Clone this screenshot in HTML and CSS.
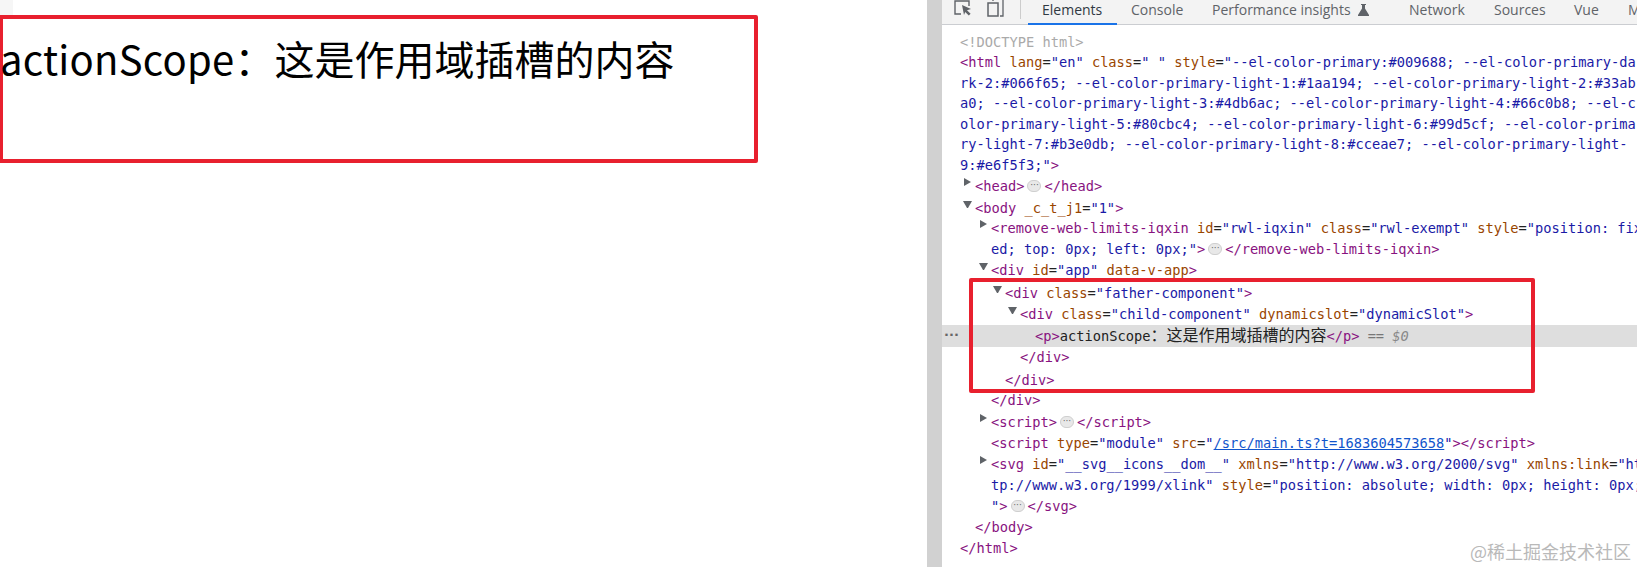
FILE: index.html
```html
<!DOCTYPE html>
<html lang="zh">
<head>
<meta charset="utf-8">
<title>actionScope</title>
<link rel="stylesheet" href="styles.css">
</head>
<body>
<div class="page">
  <main class="main">
    <div class="result-box"><p class="result-text"><span class="result-latin">actionScope</span>：这是作用域插槽的内容</p></div>
  </main>
  <div class="divider"></div>
  <section class="devtools">
    <nav class="tabbar">
      <div class="tools">
        <svg class="tool" width="22" height="22" viewBox="0 0 22 22"><path d="M8 16H2V3h14v5" fill="none" stroke="#5f6368" stroke-width="1.4"/><path d="M9 7l9 4-4 1.2 3.600 3.600-1.800 1.800-3.600-3.600L11 17z" fill="#5f6368"/></svg>
        <svg class="tool" width="22" height="22" viewBox="0 0 22 22"><path d="M9 3V1h10v17h-3" fill="none" stroke="#5f6368" stroke-width="1.3"/><rect x="4" y="5" width="10" height="13" fill="none" stroke="#5f6368" stroke-width="1.5"/></svg>
      </div>
      <a class="tab tab-active">Elements</a>
      <a class="tab tab-console">Console</a>
      <a class="tab tab-perf">Performance insights<svg class="flask" width="11" height="12" viewBox="0 0 11 12"><path d="M3 0h5v1H7v3.500l4 6.500v1H0v-1l4-6.500V1H3z" fill="#5f6368"/></svg></a>
      <a class="tab tab-network">Network</a>
      <a class="tab tab-sources">Sources</a>
      <a class="tab tab-vue">Vue</a>
      <a class="tab tab-more">M</a>
    </nav>
    <div class="tree">
      <div class="row l0 doctype">&lt;!DOCTYPE html&gt;</div>
      <div class="row wrap l0"><b>&lt;html</b> <i>lang</i>=<u>"en"</u> <i>class</i>=<u>" "</u> <i>style</i>=<u>"--el-color-primary:#009688; --el-color-primary-da</u></div>
      <div class="row wrap l0"><u>rk-2:#066f65; --el-color-primary-light-1:#1aa194; --el-color-primary-light-2:#33ab</u></div>
      <div class="row wrap l0"><u>a0; --el-color-primary-light-3:#4db6ac; --el-color-primary-light-4:#66c0b8; --el-c</u></div>
      <div class="row wrap l0"><u>olor-primary-light-5:#80cbc4; --el-color-primary-light-6:#99d5cf; --el-color-prima</u></div>
      <div class="row wrap l0"><u>ry-light-7:#b3e0db; --el-color-primary-light-8:#cceae7; --el-color-primary-light-</u></div>
      <div class="row l0"><u>9:#e6f5f3;"</u><b>&gt;</b></div>
      <div class="row l1"><span class="arrow"></span><b>&lt;head&gt;</b><span class="dots">···</span><b>&lt;/head&gt;</b></div>
      <div class="row l1 mt1"><span class="arrow open"></span><b>&lt;body</b> <i>_c_t_j1</i>=<u>"1"</u><b>&gt;</b></div>
      <div class="row l2"><span class="arrow"></span><b>&lt;remove-web-limits-iqxin</b> <i>id</i>=<u>"rwl-iqxin"</u> <i>class</i>=<u>"rwl-exempt"</u> <i>style</i>=<u>"position: fix</u></div>
      <div class="row l2"><u>ed; top: 0px; left: 0px;"</u><b>&gt;</b><span class="dots">···</span><b>&lt;/remove-web-limits-iqxin&gt;</b></div>
      <div class="row l2"><span class="arrow open"></span><b>&lt;div</b> <i>id</i>=<u>"app"</u> <i>data-v-app</i><b>&gt;</b></div>
      <div class="row l3 mt2"><span class="arrow open"></span><b>&lt;div</b> <i>class</i>=<u>"father-component"</u><b>&gt;</b></div>
      <div class="row l4"><span class="arrow open"></span><b>&lt;div</b> <i>class</i>=<u>"child-component"</u> <i>dynamicslot</i>=<u>"dynamicSlot"</u><b>&gt;</b></div>
      <div class="row l5 selected"><span class="more">···</span><b>&lt;p&gt;</b>actionScope<span class="cjk">：这是作用域插槽的内容</span><b>&lt;/p&gt;</b> <span class="eq">== <em>$0</em></span></div>
      <div class="row l4"><b>&lt;/div&gt;</b></div>
      <div class="row l3 mt2"><b>&lt;/div&gt;</b></div>
      <div class="row l2"><b>&lt;/div&gt;</b></div>
      <div class="row l2 mt1"><span class="arrow"></span><b>&lt;script&gt;</b><span class="dots">···</span><b>&lt;/script&gt;</b></div>
      <div class="row l2"><b>&lt;script</b> <i>type</i>=<u>"module"</u> <i>src</i>=<u>"</u><a class="link">/src/main.ts?t=1683604573658</a><u>"</u><b>&gt;&lt;/script&gt;</b></div>
      <div class="row l2"><span class="arrow"></span><b>&lt;svg</b> <i>id</i>=<u>"__svg__icons__dom__"</u> <i>xmlns</i>=<u>"http://www.w3.org/2000/svg"</u> <i>xmlns:link</i>=<u>"ht</u></div>
      <div class="row l2"><u>tp://www.w3.org/1999/xlink"</u> <i>style</i>=<u>"position: absolute; width: 0px; height: 0px;</u></div>
      <div class="row l2"><u>"</u><b>&gt;</b><span class="dots">···</span><b>&lt;/svg&gt;</b></div>
      <div class="row l1 mt1"><b>&lt;/body&gt;</b></div>
      <div class="row l0"><b>&lt;/html&gt;</b></div>
    </div>
    <div class="annotation"></div>
    <div class="watermark">@稀土掘金技术社区</div>
  </section>
</div>
</body>
</html>
```

FILE: styles.css
```css
* { box-sizing: border-box; }
html, body { margin: 0; padding: 0; height: 100%; background: #fff; overflow: hidden; }
.page { display: flex; height: 567px; width: 1637px; }

.main {
  width: 927px;
  flex: none;
  padding-top: 15px;
  background: linear-gradient(#f6f6f6, #f6f6f6) no-repeat 0 0 / 13px 15px;
}
.result-box {
  width: 758px;
  height: 148px;
  border: 4px solid #e8202e;
  border-left-width: 3px;
  border-radius: 0 2px 2px 0;
  padding-top: 10px;
}
.result-text {
  margin: 0 0 0 -3px;
  font: 40px/58px "Noto Sans CJK SC", sans-serif;
  color: #000;
  white-space: nowrap;
}
.result-latin { letter-spacing: 0.25px; }

.divider { width: 15px; flex: none; background: #d1d1d1; }

.devtools { flex: 1; min-width: 0; position: relative; overflow: hidden; }

.tabbar {
  height: 25px;
  display: flex;
  align-items: flex-start;
  background: #f3f3f3;
  border-bottom: 1px solid #cbcdd1;
  font: 14px/19px "Open Sans", sans-serif;
  color: #5f6368;
  white-space: nowrap;
}
.tools {
  width: 78px;
  flex: none;
  height: 24px;
  display: flex;
  gap: 9px;
  padding-left: 11px;
  position: relative;
}
.tool { margin-top: -2px; }
.tools::after {
  content: "";
  position: absolute;
  left: 78px;
  top: 0;
  width: 1px;
  height: 19px;
  background: #ccc;
}
.tab { display: block; flex: none; }
.tab-active {
  width: 89px;
  margin-left: 8px;
  padding-left: 14px;
  height: 25px;
  color: #303942;
  border-bottom: 2px solid #1a73e8;
}
.tab-console { margin-left: 14px; width: 81px; }
.tab-perf { width: 197px; }
.flask { margin-left: 7px; vertical-align: -1px; }
.tab-network { width: 85px; }
.tab-sources { width: 80px; }
.tab-vue { width: 54px; }

.tree {
  padding-top: 6.6px;
  font: 13.7px/20.85px "DejaVu Sans Mono", "Noto Sans CJK SC", monospace;
  color: #222;
  white-space: nowrap;
}
.row { height: 20.85px; position: relative; }
.row.wrap { height: 20.5px; }
.mt1 { margin-top: 1px; }
.mt2 { margin-top: 2px; }
.row b { font-weight: normal; color: #881280; }
.row i { font-style: normal; color: #994500; }
.row u { text-decoration: none; color: #1a1aa6; }
.doctype { color: #aaa; }
.l0 { padding-left: 18px; }
.l1 { padding-left: 33px; }
.l2 { padding-left: 49px; }
.l3 { padding-left: 63px; }
.l4 { padding-left: 78px; }
.l5 { padding-left: 93px; }
.row.selected { background: #dedede; height: 22px; line-height: 22px; }
.cjk { font-size: 16px; }
.link { color: #1155cc; text-decoration: underline; }
.eq { color: #777; }
.eq em { color: #888; }

.arrow {
  display: inline-block;
  width: 7px;
  height: 0;
  margin-left: -11px;
  margin-right: 4px;
  vertical-align: 5px;
  border-left: 7px solid #5f6368;
  border-top: 4.5px solid transparent;
  border-bottom: 4.5px solid transparent;
}
.arrow.open {
  width: 9px;
  margin-left: -12px;
  margin-right: 3px;
  border-left: 4.5px solid transparent;
  border-right: 4.5px solid transparent;
  border-top: 7px solid #5f6368;
  border-bottom: 0;
}
.dots {
  display: inline-block;
  width: 14px;
  height: 12px;
  margin: 0 3px;
  border-radius: 6px;
  background: #e8e8e8;
  border: 1px solid #cfcfcf;
  font: 9px/9px "DejaVu Sans", sans-serif;
  color: #666;
  text-align: center;
  vertical-align: -1px;
  overflow: hidden;
}
.more {
  position: absolute;
  left: 2px;
  top: 0;
  font: bold 13px/19px "DejaVu Sans", sans-serif;
  color: #666;
}

.annotation {
  position: absolute;
  left: 27px;
  top: 278px;
  width: 566px;
  height: 115px;
  border: 4px solid #e8202e;
  border-radius: 2px;
}
.watermark {
  position: absolute;
  right: 6px;
  top: 540px;
  font: 18px/22px "Noto Sans CJK SC", sans-serif;
  color: #b9b9b9;
  white-space: nowrap;
}
```
